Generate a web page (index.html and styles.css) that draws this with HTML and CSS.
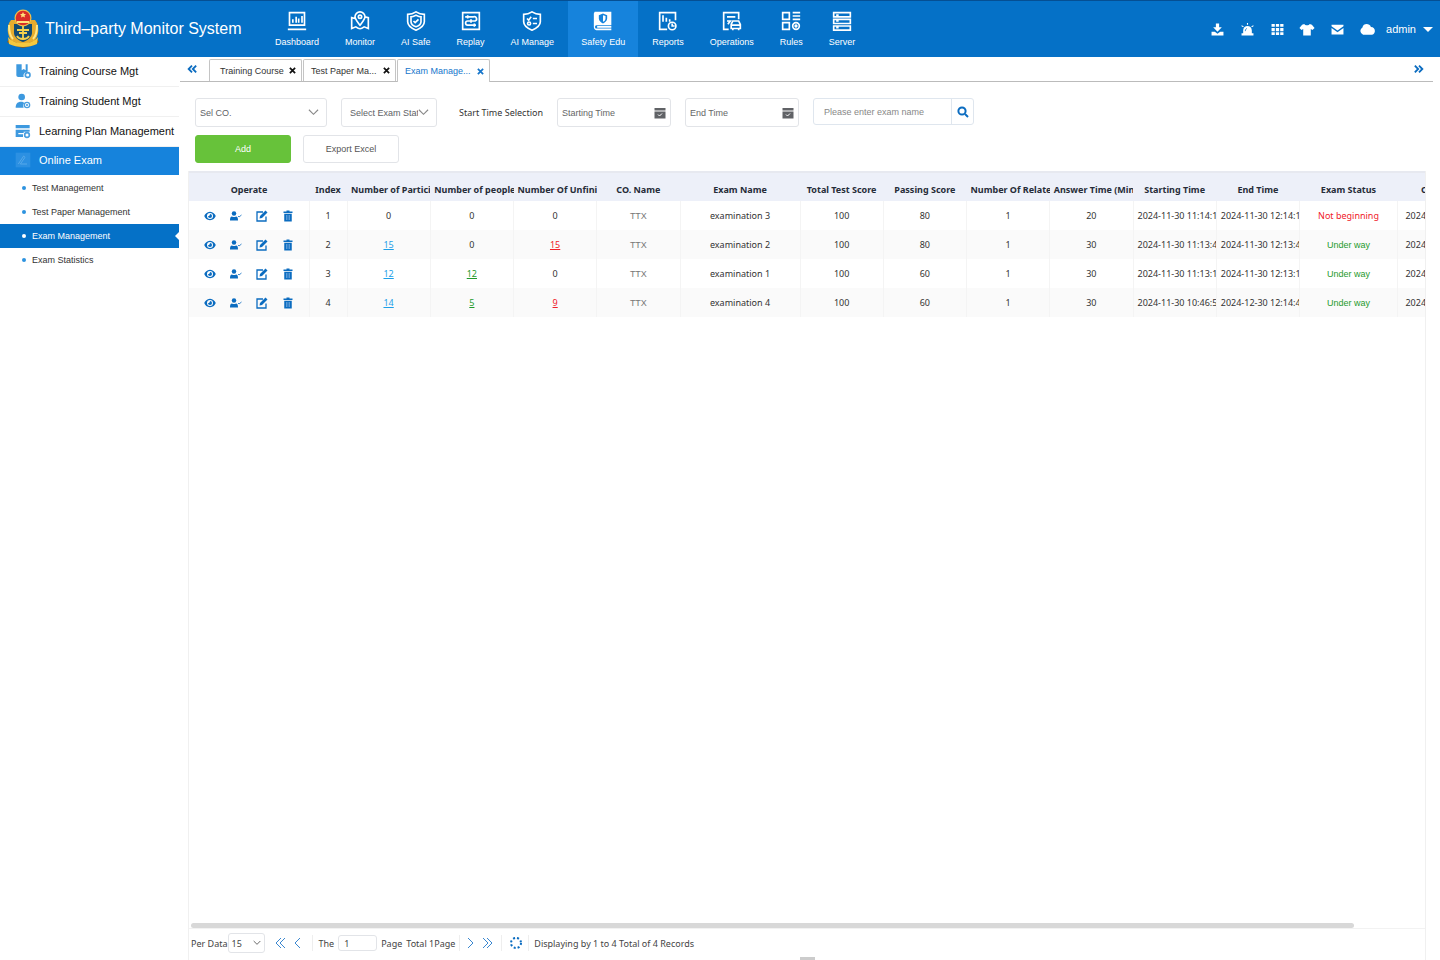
FILE: index.html
```html
<!DOCTYPE html>
<html lang="en">
<head>
    <meta charset="UTF-8">
    <meta name="viewport" content="width=device-width, initial-scale=1.0">
    <title>Third–party Monitor System</title>
    <link rel="stylesheet" href="styles.css">
</head>
<body>
    <!-- shared icons -->
    <svg class="sprite" aria-hidden="true">
        <symbol id="i-eye" viewBox="0 0 24 24"><path d="M12 3.500C6 3.500 2 8 .5 12 2 16 6 20.500 12 20.500S22 16 23.500 12C22 8 18 3.500 12 3.500Zm0 14.500a6 6 0 1 1 0-12 6 6 0 0 1 0 12Z"/><path d="M12 8a4 4 0 1 1-4 4c1.800.6 4-1 4-4Z"/></symbol>
        <symbol id="i-user" viewBox="0 0 24 24"><circle cx="8" cy="7" r="4.500"/><path d="M0 21c0-5 1-8 4-8 2 1.500 6 1.500 8 0 3 0 4 3 4 8Z"/><path d="m16 12 2 2 5-4" fill="none" stroke="currentColor" stroke-width="1.600"/></symbol>
        <symbol id="i-edit" viewBox="0 0 24 24"><path d="M14 4H2v18h18v-9" fill="none" stroke="currentColor" stroke-width="2.600"/><path d="m7 17 1-5L19 1l4 4-11 11Z"/></symbol>
        <symbol id="i-trash" viewBox="0 0 24 24"><path d="M3 3h6V1h6v2h6v3H3ZM4.500 7.500h15V23h-15Z"/><path d="M9 10v10M12 10v10M15 10v10" stroke="#8fbbe4" stroke-width="1.200"/></symbol>
        <symbol id="i-calendar" viewBox="0 0 24 24"><path d="M1 2h22v5H1ZM1 9h22v14H1Z"/><path d="m8 15 3 3 5-5" fill="none" stroke="#fff" stroke-width="2"/></symbol>
        <symbol id="i-down" viewBox="0 0 12 12"><path d="m1 3 5 5 5-5" fill="none" stroke="currentColor" stroke-width="1.200"/></symbol>
        <symbol id="i-dbl" viewBox="0 0 12 12"><path d="M6 2 2 6l4 4M11 2 7 6l4 4" fill="none" stroke="currentColor" stroke-width="2.200"/></symbol>
    </svg>

    <header class="topbar">
        <div class="brand">
            <svg class="emblem" viewBox="0 0 34 40" aria-hidden="true">
                <path d="M17 39c-6-1-12-3-16-6l3-4h26l3 4c-4 3-10 5-16 6Z" fill="#8b5a18"/>
                <path d="M5 11C0 17 1 27 6 32l11 4 11-4c5-5 6-15 1-21Z" fill="#e6ac2e"/>
                <path d="M8 15h18v9c0 4-5 8-9 9-4-1-9-5-9-9Z" fill="#134c72"/>
                <path d="M17 16v15M11 21h12M11 27c2 4 10 4 12 0M13 24h8" fill="none" stroke="#f5d34d" stroke-width="1.800"/>
                <path d="M2 28c4 5 9 6 15 6s11-1 15-6l-1 7c-4 2-9 3-14 3S7 37 3 35Z" fill="#f5c83f"/>
                <circle cx="17" cy="9" r="8.500" fill="#eec34b"/>
                <circle cx="17" cy="9" r="7.300" fill="#d92d27"/>
                <path d="m17 3 1 2h2l-1.500 1.500.5 2-2-1-2 1 .5-2L14 5h2ZM11 12h12v2H11Z" fill="#ffe17b"/>
                <path d="M3 16c0 7 1 11 4 14M31 16c0 7-1 11-4 14" fill="none" stroke="#ffe889" stroke-width="2"/>
            </svg>
            <span>Third–party Monitor System</span>
        </div>
        <nav class="main-nav">
            <a href="#"><svg viewBox="0 0 24 24"><path d="M3 2h18v15H3ZM1 22h22M7 14v-4M11 14V7M14 14V9M18 14V6"/></svg>Dashboard</a>
            <a href="#"><svg viewBox="0 0 24 24"><path d="M6 9 2 8v13l5-2c4 3 6 3 10 0l5 2V8l-4-1M12 17C9 13 6 10 6 7a6 6 0 0 1 12 0c0 3-3 6-6 10Z"/><circle cx="12" cy="7" r="2"/></svg>Monitor</a>
            <a href="#"><svg viewBox="0 0 24 24"><path d="M12 1c3 2 6 3 10 3v9c0 5-5 8-10 10C7 21 2 18 2 13V4c4 0 7-1 10-3Z"/><path d="M12 5c2 1 4 2 6 2v6c0 3-3 5-6 6-3-1-6-3-6-6V7c2 0 4-1 6-2ZM9 12l2 2 4-4"/></svg>AI Safe</a>
            <a href="#"><svg viewBox="0 0 24 24"><path d="M2 2h20v20H2ZM5 7h10a2 2 0 0 1 2 5H8a2 2 0 0 0 0 5h10M8 5v4M16 15v4M12 10v4"/></svg>Replay</a>
            <a href="#"><svg viewBox="0 0 24 24"><path d="M12 1c3 2 6 3 10 3v9c0 5-5 8-10 10C7 21 2 18 2 13V4c4 0 7-1 10-3ZM6 9l2 2 3-4M13 9h5M13 15h5"/><circle cx="8.500" cy="15" r="1.800"/></svg>AI Manage</a>
            <a href="#" class="active"><svg viewBox="0 0 24 24"><path class="solid" fill-rule="evenodd" d="M2 1h20v16H4c-2 0-2 4 0 4h18v2H4c-2 0-3-2-3-4V3Zm10 2L7 5v4c0 3 3 5 5 6 2-1 5-3 5-6V5Z"/><path class="solid" d="M12 5v8c2-1 3-2 3-4V6ZM5 18h17v2H5Z"/></svg>Safety Edu</a>
            <a href="#"><svg viewBox="0 0 24 24"><path d="M11 22H2V2h19v9M6 5v8M10 8v5M14 10v3"/><circle cx="17" cy="18" r="4.500"/><path d="M17 15v3h3"/></svg>Reports</a>
            <a href="#"><svg viewBox="0 0 24 24"><path d="M8 22H2V2h18v8M6 7h10M6 12h4l-3 4M11 16l2-4h7l2 4v5H11ZM10 17h13M13 21v2M20 21v2"/></svg>Operations</a>
            <a href="#"><svg viewBox="0 0 24 24"><path d="M2 2h8v8H2ZM2 14h8v8H2ZM14 2h9M14 6h9M14 10h9"/><circle cx="18" cy="18" r="4"/><circle cx="18" cy="18" r="1"/></svg>Rules</a>
            <a href="#"><svg viewBox="0 0 24 24"><path d="M2 2h20v5H2ZM2 10h20v5H2ZM2 18h20v5H2ZM5 5h3M5 12h3M5 20h3"/></svg>Server</a>
        </nav>
        <div class="tools">
            <button type="button" aria-label="Download"><svg viewBox="0 0 24 24"><path d="M9 1h6v7h5l-8 8-8-8h5ZM1 16h6l5 4 5-4h6v7H1Z"/></svg></button>
            <button type="button" aria-label="Alarm"><svg viewBox="0 0 24 24"><path d="M4 19v-5c0-11 16-11 16 0v5h3v4H1v-4ZM11 0h2v3h-2ZM1 4l4 2-1 2-3-2ZM23 4l-4 2 1 2 3-2Z"/><path d="M8 15c0-3 1-4 3-5" fill="none" stroke="#0571c7" stroke-width="1.500"/></svg></button>
            <button type="button" aria-label="Apps"><svg viewBox="0 0 24 24"><path d="M1 2h6v5H1ZM9 2h6v5H9ZM17 2h6v5h-6ZM1 9h6v6H1ZM9 9h6v6H9ZM17 9h6v6h-6ZM1 17h6v5H1ZM9 17h6v5H9ZM17 17h6v5h-6Z"/></svg></button>
            <button type="button" aria-label="Theme"><svg class="wide" viewBox="0 0 28 24"><path d="M9 2c1 3 9 3 10 0l4 1 5 6-4 4-3-2v12H7V11l-3 2-4-4 5-6Z"/></svg></button>
            <button type="button" aria-label="Mail"><svg viewBox="0 0 24 24"><path d="M1 3h22v3l-11 8L1 6ZM1 9l11 8 11-8v12H1Z"/></svg></button>
            <button type="button" aria-label="Cloud"><svg class="wide" viewBox="0 0 24 20"><path d="M6 18a6 6 0 0 1-1-11C6 0 16 0 18 6c8 0 8 12 1 12Z"/></svg></button>
            <button type="button" class="account">admin <i class="caret"></i></button>
        </div>
    </header>

    <div class="layout">
        <aside class="sidebar">
            <a href="#" class="group"><svg viewBox="0 0 24 24"><path d="M2 2h17v11a6 6 0 0 0-6 8H5c-2 0-3-1-3-3ZM10 2v9l3-2 3 2V2Z" fill-rule="evenodd"/><circle cx="19" cy="18" r="3.500" fill="none" stroke="#4a9fe0" stroke-width="2.500"/></svg>Training Course Mgt</a>
            <a href="#" class="group"><svg viewBox="0 0 24 24"><circle cx="10" cy="6" r="5"/><path d="M1 22c0-6 3-9 8-9 3 0 4 1 5 2-2 2-2 5-1 7Z"/><circle cx="18" cy="18" r="4" fill="none" stroke="#4a9fe0" stroke-width="2"/><circle cx="18" cy="18" r="1.500"/></svg>Training Student Mgt</a>
            <a href="#" class="group"><svg viewBox="0 0 24 24"><path d="M1 3h21v5H1ZM1 10h21v3h-9v2H5v2h7v4H1Z"/><circle cx="18" cy="18" r="3.500" fill="none" stroke="#4a9fe0" stroke-width="2.500"/></svg>Learning Plan Management</a>
            <a href="#" class="group open"><svg viewBox="0 0 24 24"><path d="M1 1h22v22H1Z" fill="#2c90e2"/><path d="m5 18 8-12 2 2-7 10h10" fill="none" stroke="#56a9ea" stroke-width="1.500"/></svg>Online Exam</a>
            <ul class="submenu">
                <li><a href="#">Test Management</a></li>
                <li><a href="#">Test Paper Management</a></li>
                <li><a href="#" class="current">Exam Management</a></li>
                <li><a href="#">Exam Statistics</a></li>
            </ul>
        </aside>

        <main class="content">
            <div class="tabs">
                <button type="button" class="scroll" aria-label="Scroll tabs left"><svg viewBox="0 0 12 12"><use href="#i-dbl"/></svg></button>
                <div class="tab first"><a href="#">Training Course</a><button type="button" aria-label="Close Training Course"><svg viewBox="0 0 8 8"><path d="m1 1 6 6M7 1 1 7"/></svg></button></div>
                <div class="tab"><a href="#">Test Paper Ma...</a><button type="button" aria-label="Close Test Paper Management"><svg viewBox="0 0 8 8"><path d="m1 1 6 6M7 1 1 7"/></svg></button></div>
                <div class="tab active"><a href="#">Exam Manage...</a><button type="button" aria-label="Close Exam Management"><svg viewBox="0 0 8 8"><path d="m1 1 6 6M7 1 1 7"/></svg></button></div>
                <button type="button" class="scroll right" aria-label="Scroll tabs right"><svg viewBox="0 0 12 12"><use href="#i-dbl"/></svg></button>
            </div>

            <form class="filters">
                <div class="field company">
                    <select aria-label="Company"><option>Sel CO.</option></select>
                    <svg viewBox="0 0 12 12"><use href="#i-down"/></svg>
                </div>
                <div class="field status">
                    <select aria-label="Exam status"><option>Select Exam Status</option></select>
                    <svg viewBox="0 0 12 12"><use href="#i-down"/></svg>
                </div>
                <label for="startTime">Start Time Selection</label>
                <div class="field date">
                    <input type="text" id="startTime" placeholder="Starting Time">
                    <svg viewBox="0 0 24 24"><use href="#i-calendar"/></svg>
                </div>
                <div class="field date">
                    <input type="text" aria-label="End time" placeholder="End Time">
                    <svg viewBox="0 0 24 24"><use href="#i-calendar"/></svg>
                </div>
                <div class="search">
                    <input type="text" aria-label="Exam name" placeholder="Please enter exam name">
                    <button type="submit" aria-label="Search"><svg viewBox="0 0 12 12"><circle cx="5" cy="5" r="3.600"/><path d="m8 8 3 3"/></svg></button>
                </div>
            </form>
            <div class="actions">
                <button type="button" class="btn add">Add</button>
                <button type="button" class="btn">Export Excel</button>
            </div>

            <section class="panel">
                <div class="table-wrap">
                    <table>
                        <colgroup>
                            <col class="c-ops"><col class="c-index"><col><col><col><col><col class="c-name"><col><col><col><col><col><col><col class="c-status"><col class="c-create">
                        </colgroup>
                        <thead>
                            <tr>
                                <th>Operate</th><th>Index</th><th class="cut">Number of Participants</th><th class="cut">Number of people finished</th><th class="cut">Number Of Unfinished</th><th>CO. Name</th><th>Exam Name</th><th>Total Test Score</th><th>Passing Score</th><th class="cut">Number Of Related</th><th class="cut">Answer Time (Min)</th><th>Starting Time</th><th>End Time</th><th>Exam Status</th><th>Create Time</th>
                            </tr>
                        </thead>
                        <tbody id="rows"></tbody>
                    </table>
                </div>
                <div class="hscroll"><div class="thumb"></div></div>
                <div class="pager">
                    <label for="perPage">Per Data</label>
                    <div class="per-page">
                        <select id="perPage"><option>15</option></select>
                        <svg viewBox="0 0 12 12"><use href="#i-down"/></svg>
                    </div>
                    <div class="group-nav">
                        <button type="button" aria-label="First page"><svg viewBox="0 0 12 12"><path d="M6 1 1 6l5 5M10 1 5 6l5 5"/></svg></button>
                        <button type="button" aria-label="Previous page"><svg viewBox="0 0 12 12"><path d="M8 1 3 6l5 5"/></svg></button>
                    </div>
                    <div class="group-page">
                        <label for="pageNo">The</label>
                        <input type="text" id="pageNo" value="1">
                        <span>Page</span>
                        <span>Total 1Page</span>
                    </div>
                    <div class="group-nav">
                        <button type="button" aria-label="Next page"><svg viewBox="0 0 12 12"><path d="m4 1 5 5-5 5"/></svg></button>
                        <button type="button" aria-label="Last page"><svg viewBox="0 0 12 12"><path d="m2 1 5 5-5 5M6 1l5 5-5 5"/></svg></button>
                    </div>
                    <div class="group-load">
                        <button type="button" aria-label="Refresh"><svg class="loader" viewBox="0 0 12 12"><circle cx="6" cy="6" r="5"/></svg></button>
                    </div>
                    <span class="summary">Displaying by 1 to 4 Total of 4 Records</span>
                </div>
                <div class="handle"></div>
            </section>
        </main>
    </div>

    <script>
        const exams = [
            { joined: 0, done: 0, open: 0, name: 'examination 3', pass: 80, minutes: 20, start: '2024-11-30 11:14:10', end: '2024-11-30 12:14:10', status: 'Not beginning' },
            { joined: 15, done: 0, open: 15, name: 'examination 2', pass: 80, minutes: 30, start: '2024-11-30 11:13:40', end: '2024-11-30 12:13:40', status: 'Under way' },
            { joined: 12, done: 12, open: 0, name: 'examination 1', pass: 60, minutes: 30, start: '2024-11-30 11:13:10', end: '2024-11-30 12:13:10', status: 'Under way' },
            { joined: 14, done: 5, open: 9, name: 'examination 4', pass: 60, minutes: 30, start: '2024-11-30 10:46:50', end: '2024-12-30 12:14:40', status: 'Under way' }
        ];

        const count = (n, cls) => n ? `<a href="#" class="${cls}">${n}</a>` : n;
        const op = (icon, label) => `<button type="button" aria-label="${label}"><svg viewBox="0 0 24 24"><use href="#${icon}"/></svg></button>`;

        document.getElementById('rows').innerHTML = exams.map((e, i) => `
            <tr>
                <td><div class="ops">${op('i-eye', 'View')}${op('i-user', 'Assign')}${op('i-edit', 'Edit')}${op('i-trash', 'Delete')}</div></td>
                <td>${i + 1}</td>
                <td>${count(e.joined, 'blue')}</td>
                <td>${count(e.done, 'green')}</td>
                <td>${count(e.open, 'red')}</td>
                <td class="co">TTX</td>
                <td>${e.name}</td>
                <td>100</td>
                <td>${e.pass}</td>
                <td>1</td>
                <td>${e.minutes}</td>
                <td class="cut">${e.start}</td>
                <td class="cut">${e.end}</td>
                <td class="${e.status === 'Under way' ? 'running' : 'waiting'}">${e.status}</td>
                <td>${e.start}</td>
            </tr>
        `).join('');
    </script>
</body>
</html>
```
FILE: styles.css
```css
* { margin: 0; padding: 0; box-sizing: border-box; }
body {
    display: flex;
    flex-direction: column;
    min-height: 100vh;
    font-family: "Liberation Sans", Arial, sans-serif;
    font-size: 9px;
    color: #333;
    background: #fff;
}
a { color: inherit; text-decoration: none; }
button, input, select { font: inherit; color: inherit; border: none; background: none; outline: none; }
button { cursor: pointer; }
svg { display: block; flex: none; }
.sprite { position: absolute; width: 0; height: 0; }

/* top bar */
.topbar {
    display: flex;
    height: 57px;
    color: #fff;
    background: #0571c7;
    border-top: 1px solid #054f93;
}
.brand {
    display: flex;
    align-items: center;
    gap: 5px;
    width: 262px;
    padding-left: 6px;
    font-size: 16px;
    white-space: nowrap;
}
.emblem { width: 34px; height: 40px; }
.main-nav { display: flex; }
.main-nav a {
    display: flex;
    flex-direction: column;
    align-items: center;
    gap: 5px;
    padding: 10px 13px 0;
    line-height: 12px;
    white-space: nowrap;
}
.main-nav a.active { margin: 0 1px; background: #1683dc; }
.main-nav svg { width: 20px; height: 20px; fill: none; stroke: #fff; stroke-width: 2; }
.main-nav .solid { fill: #fff; stroke: none; }
.tools { display: flex; align-items: center; margin-left: auto; padding-right: 7px; }
.tools button { display: flex; align-items: center; justify-content: center; width: 30px; height: 30px; }
.tools svg { width: 13px; height: 13px; fill: #fff; }
.tools svg.wide { width: 16px; }
.tools .account { gap: 7px; width: auto; padding-left: 4px; font-size: 11px; }
.caret { border: 5px solid transparent; border-top-color: #fff; border-bottom: none; }

.layout { display: flex; flex: 1; }

/* sidebar */
.sidebar { width: 180px; padding-right: 1px; }
.group {
    display: flex;
    align-items: center;
    gap: 8px;
    height: 30px;
    padding: 0 0 2px 15px;
    border-bottom: 1px solid #f0f0f0;
    font-size: 11px;
    color: #111;
    white-space: nowrap;
}
.group svg { width: 16px; height: 16px; fill: #3d99df; }
.group.open { height: 28px; border: none; color: #fff; background: #1683dc; }
.submenu { list-style: none; padding-top: 1px; }
.submenu a {
    display: flex;
    align-items: center;
    position: relative;
    height: 24px;
    padding-left: 22px;
}
.submenu a::before {
    content: "";
    width: 4px;
    height: 4px;
    margin-right: 6px;
    border-radius: 50%;
    background: #2d93df;
}
.submenu a.current { color: #fff; background: #0571c7; }
.submenu a.current::before { background: #fff; }
.submenu a.current::after {
    content: "";
    position: absolute;
    right: 0;
    top: 8px;
    border: 4px solid transparent;
    border-right-color: #fff;
    border-left: none;
}

/* tabs */
.content { display: flex; flex-direction: column; flex: 1; min-width: 0; padding-right: 7px; }
.tabs {
    display: flex;
    align-items: flex-end;
    gap: 1px;
    height: 25px;
    border-bottom: 1px solid #bbb;
}
.tabs .scroll { width: 28px; height: 24px; padding-left: 7px; color: #0b6cc0; }
.tabs .scroll svg { width: 10px; height: 10px; }
.tabs .right { margin-left: auto; padding-left: 9px; }
.tabs .right svg { transform: scaleX(-1); }
.tab {
    display: flex;
    align-items: center;
    justify-content: space-between;
    width: 93px;
    height: 22px;
    padding: 0 5px 0 7px;
    border: 1px solid #c4c4c4;
    border-bottom: none;
    border-radius: 2px 2px 0 0;
    white-space: nowrap;
}
.tab.first { padding-left: 10px; }
.tab svg { width: 7px; height: 7px; fill: none; stroke: #111; stroke-width: 2; }
.tab.active { color: #1676cb; background: #fff; height: 23px; margin-bottom: -1px; }
.tab.active svg { stroke: #1676cb; }

/* filters */
.filters {
    display: flex;
    align-items: center;
    gap: 14px;
    padding: 16px 0 8px 15px;
    color: #606266;
}
.filters label { margin-left: 8px; color: #333; white-space: nowrap; font-family: "Noto Sans", sans-serif; }
.field {
    display: flex;
    align-items: center;
    height: 29px;
    padding: 0 4px;
    border: 1px solid #e2e4e8;
    border-radius: 3px;
}
.field select, .field input { flex: 1; width: 100%; min-width: 0; height: 27px; appearance: none; }
.field svg { width: 11px; height: 11px; color: #888; }
.company { width: 132px; padding-right: 7px; }
.status { width: 96px; padding: 0 7px 0 8px; }
.date { width: 114px; }
.date svg { width: 12px; height: 12px; fill: #606266; }
::placeholder { color: #666; opacity: 1; }
.search { display: flex; align-self: flex-start; height: 27px; border: 1px solid #dfe6ee; border-radius: 3px; }
.search input { width: 137px; padding-left: 10px; }
.search ::placeholder { color: #888; }
.search button { display: flex; align-items: center; justify-content: center; width: 22px; border-left: 1px solid #dfe6ee; }
.search svg { width: 12px; height: 12px; fill: none; stroke: #0b6cc0; stroke-width: 2; }
.actions { display: flex; gap: 12px; padding: 0 0 8px 15px; }
.btn { width: 96px; height: 28px; border: 1px solid #e2e4e8; border-radius: 3px; color: #555; }
.btn.add { color: #fff; background: #67c23a; border-color: #67c23a; }

/* table */
.panel {
    display: flex;
    flex-direction: column;
    flex: 1;
    margin: 0 7px 0 8px;
    border: solid #f0f0f0;
    border-width: 0 1px;
    font-family: "Noto Sans", sans-serif;
}
.table-wrap { flex: 1; overflow: hidden; }
table { width: 1310px; min-width: 100%; table-layout: fixed; border-collapse: collapse; text-align: center; }
.c-ops { width: 120px; }
.c-index { width: 38px; }
.c-name { width: 120px; }
.c-status { width: 98px; }
.c-create { width: 101px; }
th, td { overflow: hidden; padding: 0 4px; white-space: nowrap; }
th { height: 29px; padding-top: 4px; border-top: 2px solid #e7e9f0; color: #262c38; background: #edf0f9; }
td { height: 29px; border-right: 1px solid #f4f4f4; }
tbody tr:nth-child(even) { background: #fafafa; }
td a { text-decoration: underline; }
.ops { display: flex; justify-content: center; gap: 14px; }
.ops button { display: flex; }
.ops svg { width: 12px; height: 12px; color: #0b6cc0; fill: #0b6cc0; }
.blue { color: #1e9fe8; }
.green, .running { color: #1f9a2c; }
.red, .waiting { color: #f0202a; }
.co { color: #777; }
.co, .running { font-family: "Liberation Sans", Arial, sans-serif; }
.cut { padding-right: 0; text-align: left; }

/* pager */
.hscroll { padding: 0 71px 0 2px; border-bottom: 1px solid #f2f2f2; }
.thumb { height: 5px; border-radius: 3px; background: #d8d8d8; }
.pager { display: flex; align-items: center; height: 28px; padding-left: 2px; color: #444; white-space: nowrap; }
.per-page { display: flex; align-items: center; width: 37px; height: 20px; margin-right: 6px; padding: 0 3px; border: 1px solid #e2e4e8; border-radius: 3px; }
.per-page select { flex: 1; min-width: 0; appearance: none; }
.per-page svg { width: 8px; height: 8px; }
.pager button { display: flex; }
.pager button svg { width: 12px; height: 12px; fill: none; stroke: #3a87d0; }
.group-nav, .group-page, .group-load { display: flex; align-items: center; height: 16px; border-right: 1px solid #eee; }
.group-nav { gap: 5px; padding: 0 8px 0 4px; }
.group-page { gap: 4px; padding: 0 4px 0 6px; }
.group-page input { width: 39px; height: 16px; padding-left: 5px; border: 1px solid #e2e4e8; border-radius: 3px; }
.group-load { padding: 0 6px 0 8px; }
.pager .loader { stroke: #0b6cc0; stroke-width: 2; stroke-dasharray: 2 2; }
.summary { padding-left: 5px; }
.handle { width: 15px; height: 3px; margin: 0 auto; background: #ccc; }
```
